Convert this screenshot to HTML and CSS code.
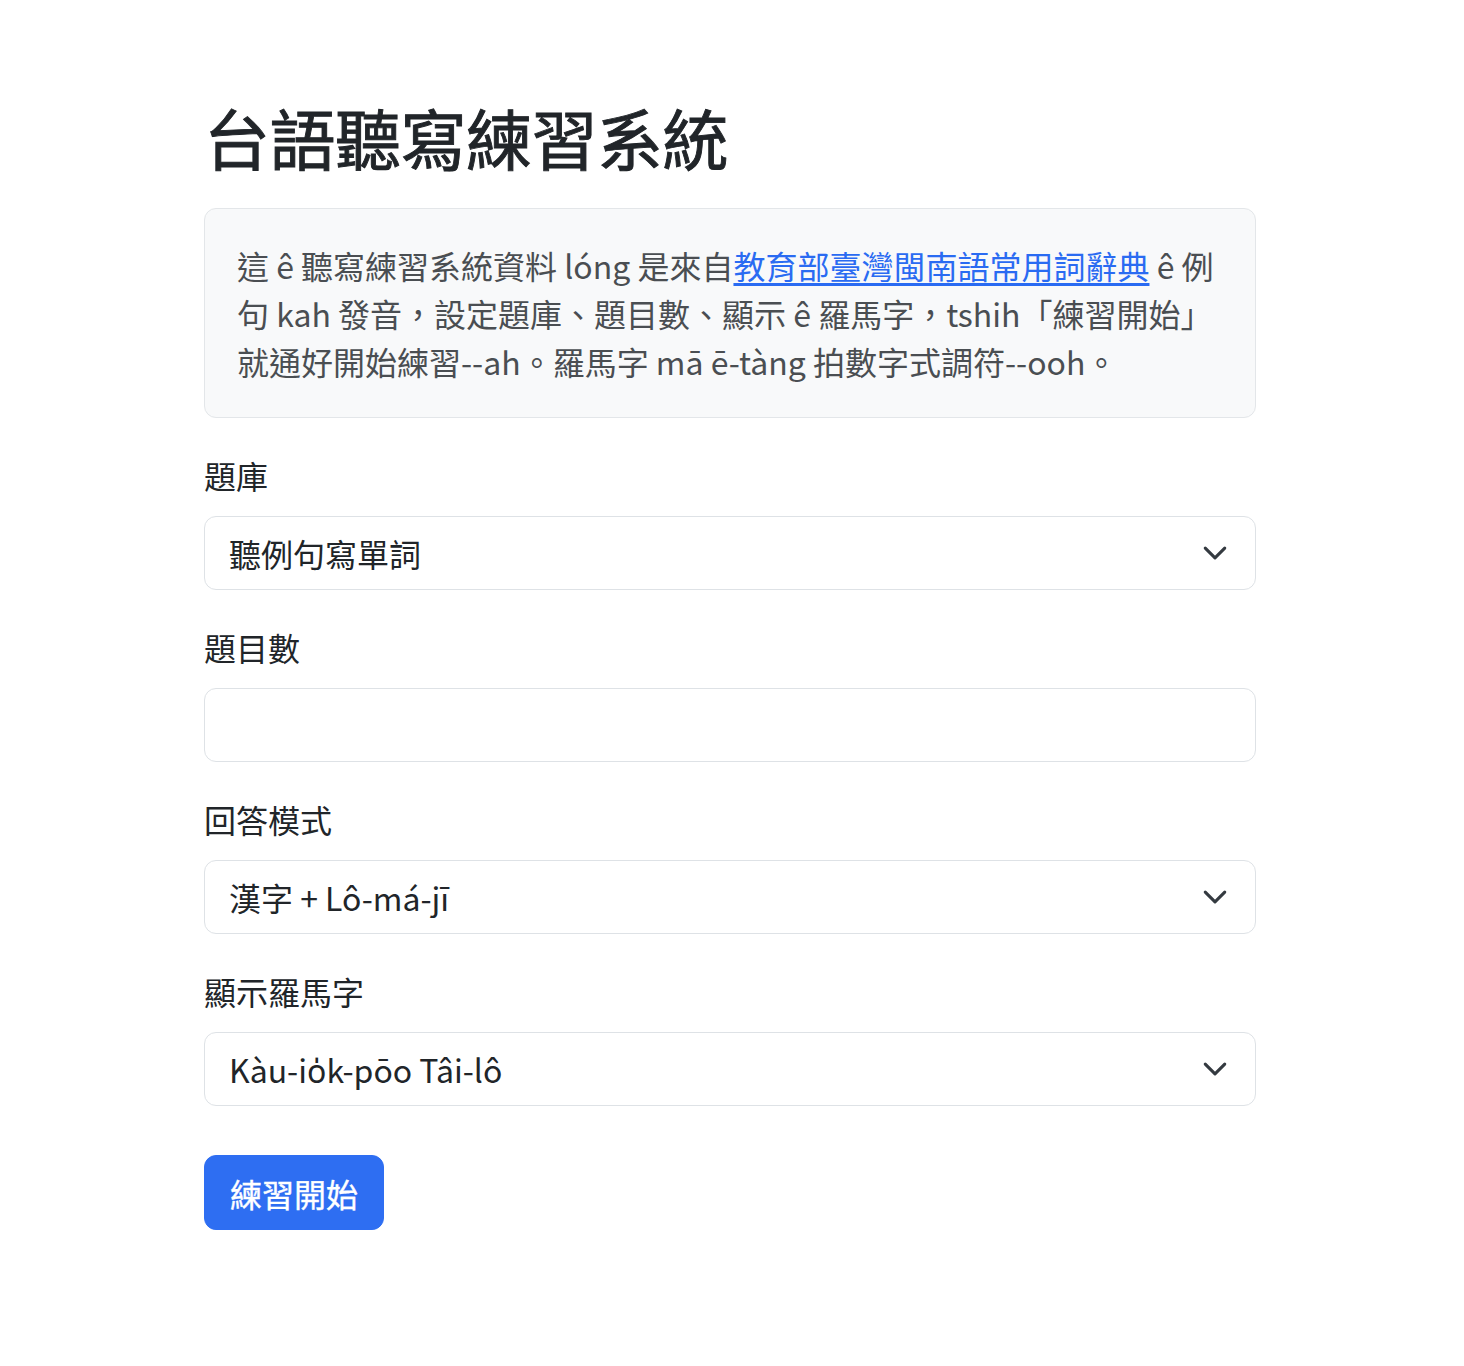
FILE: index.html
```html
<!DOCTYPE html>
<html lang="zh-Hant">
<head>
<meta charset="utf-8">
<title>台語聽寫練習系統</title>
<link rel="stylesheet" href="styles.css">
</head>
<body>
<main class="container">
  <h1 class="title">台語聽寫練習系統</h1>
  <div class="intro">這 ê 聽寫練習系統資料 lóng 是來自<a href="#" class="intro-link">教育部臺灣閩南語常用詞辭典</a> ê 例句 kah 發音，設定題庫、題目數、顯示 ê 羅馬字，tshih「練習開始」就通好開始練習--ah。羅馬字 mā ē-tàng 拍數字式調符--ooh。</div>

  <div class="field">
    <label class="field-label">題庫</label>
    <div class="select-wrap">
      <select class="control select"><option>聽例句寫單詞</option></select>
      <svg class="chevron" viewBox="0 0 16 16" width="26" height="26"><path d="m2 5 6 6 6-6" fill="none" stroke="#343a40" stroke-width="1.9" stroke-linecap="round" stroke-linejoin="round"/></svg>
    </div>
  </div>

  <div class="field">
    <label class="field-label">題目數</label>
    <input class="control" type="text" value="">
  </div>

  <div class="field">
    <label class="field-label">回答模式</label>
    <div class="select-wrap">
      <select class="control select"><option>漢字 + Lô-má-jī</option></select>
      <svg class="chevron" viewBox="0 0 16 16" width="26" height="26"><path d="m2 5 6 6 6-6" fill="none" stroke="#343a40" stroke-width="1.9" stroke-linecap="round" stroke-linejoin="round"/></svg>
    </div>
  </div>

  <div class="field">
    <label class="field-label">顯示羅馬字</label>
    <div class="select-wrap">
      <select class="control select"><option>Kàu-io̍k-pōo Tâi-lô</option></select>
      <svg class="chevron" viewBox="0 0 16 16" width="26" height="26"><path d="m2 5 6 6 6-6" fill="none" stroke="#343a40" stroke-width="1.9" stroke-linecap="round" stroke-linejoin="round"/></svg>
    </div>
  </div>

  <button class="btn-primary" type="button">練習開始</button>
</main>
</body>
</html>
```
FILE: styles.css
```css
* { box-sizing: border-box; }
html, body { margin: 0; padding: 0; background: #fff; }
body {
  font-family: "Noto Sans CJK TC", "Noto Sans", sans-serif;
  font-size: 32px;
  line-height: 48px;
  color: #212529;
}
.container {
  width: 1052px;
  margin-left: 204px;
  padding-top: 97px;
  padding-bottom: 100px;
}
.title {
  margin: 0 0 33px;
  font-size: 66px;
  line-height: 78px;
  font-weight: 400;
  -webkit-text-stroke: 0.9px #212529;
  color: #212529;
  letter-spacing: -0.5px;
}
.intro {
  background: #f8f9fa;
  border: 1px solid #e3e6e9;
  border-radius: 12px;
  padding: 32px;
  color: #4a4e52;
  margin-bottom: 33px;
}
.intro-link { color: #2a6bf2; text-decoration: underline; text-underline-offset: 4px; }
.field { display: flex; flex-direction: column; margin-bottom: 33px; }
.field-label { display: block; margin-bottom: 17px; line-height: 48px; }
.select-wrap { position: relative; }
.control {
  display: block;
  width: 100%;
  height: 74px;
  padding: 12px 24px;
  font: inherit;
  line-height: 48px;
  color: #212529;
  background: #fff;
  border: 1px solid #dee2e6;
  border-radius: 12px;
  outline: none;
}
.select { appearance: none; -webkit-appearance: none; padding-right: 72px; }
.chevron {
  position: absolute;
  right: 28px;
  top: 24px;
  pointer-events: none;
}
.btn-primary {
  margin-top: 16px;
  height: 75px;
  padding: 12px 25px;
  font: inherit;
  line-height: 48px;
  color: #fff;
  -webkit-text-stroke: 0.4px #fff;
  background: #2e6ef2;
  border: 1px solid #2e6ef2;
  border-radius: 12px;
}
```
